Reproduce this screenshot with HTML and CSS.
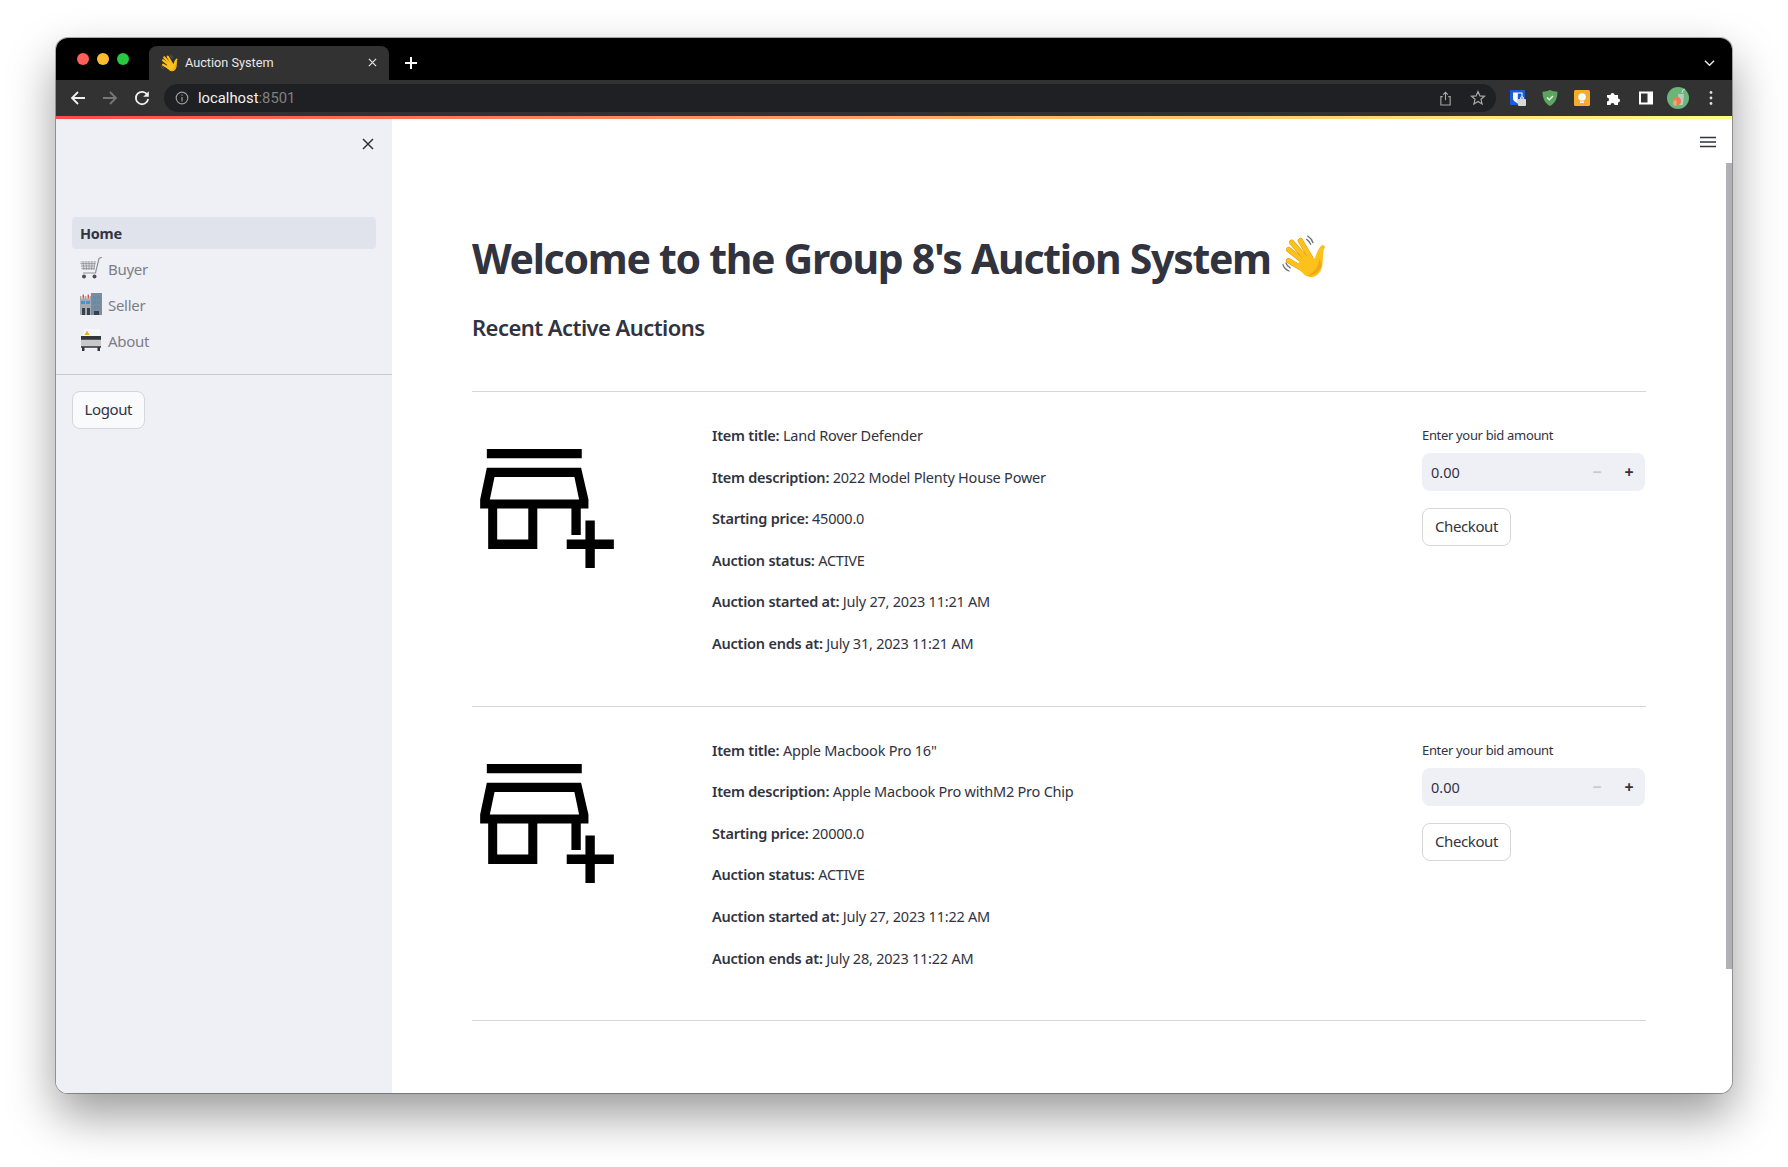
FILE: index.html
```html
<!DOCTYPE html>
<html lang="en">
<head>
    <meta charset="UTF-8">
    <meta name="viewport" content="width=device-width, initial-scale=1.0">
    <title>Auction System</title>
    <link rel="stylesheet" href="styles.css">
</head>
<body>
    <svg class="defs" width="0" height="0">
        <symbol id="wave" viewBox="30 25 135 135">
            <g fill="none" stroke="#6f7378" stroke-width="4" stroke-linecap="round">
                <path d="M110 31c8 5 13 11 16 20M107 41c6 4 9 8 12 15"/>
                <path d="M36 117c3 9 9 15 18 19M45 112c2 7 6 11 13 15"/>
            </g>
            <g fill="none" stroke="#e39a12" stroke-width="16" stroke-linecap="round">
                <path d="M62 50l44 50M88 45l30 50M53 72l48 38M53 105l42 25"/>
            </g>
            <g fill="none" stroke="#fcc21b" stroke-width="13" stroke-linecap="round">
                <path d="M62 50l44 50M88 45l30 50M53 72l48 38M53 105l42 25M155 65c-8 8-14 22-18 40"/>
            </g>
            <path d="M86 100l30-8 20 8 22-30-4 50c-4 24-22 36-38 34-14-2-24-14-36-30z" fill="#fcc21b"/>
            <path d="M146 98c-4 22-14 44-38 52 22 2 40-12 44-34z" fill="#f0a818"/>
        </symbol>
        <symbol id="store" viewBox="61 87 400 356">
            <path fill-rule="evenodd" d="M81 87h284v28H81zM81 143h282l22 95v27h-23v79h-28v-79H232v121H85V265H61v-27zM104 171l-14 67h267l-14-67zM112 265v93h93v-93z"/>
            <path d="M376 301h28v57h57v28h-57v57h-28v-57h-56v-28h56z"/>
        </symbol>
    </svg>

    <div class="window">
        <div class="tabstrip">
            <div class="lights">
                <span class="light red"></span>
                <span class="light yellow"></span>
                <span class="light green"></span>
            </div>
            <div class="tab">
                <svg class="tab-icon"><use href="#wave"/></svg>
                <span class="tab-title">Auction System</span>
                <svg class="tab-close" viewBox="0 0 10 10"><path d="M1 1l8 8M9 1l-8 8"/></svg>
            </div>
            <svg class="new-tab" viewBox="0 0 14 14"><path d="M7 1v12M1 7h12"/></svg>
            <svg class="tab-list" viewBox="0 0 12 8"><path d="M1 1.500l5 5 5-5"/></svg>
        </div>

        <div class="toolbar">
            <svg class="nav-btn" viewBox="0 0 16 16"><path d="M15 8H2M8 2L2 8l6 6"/></svg>
            <svg class="nav-btn dim" viewBox="0 0 16 16"><path d="M1 8h13M8 2l6 6-6 6"/></svg>
            <svg class="nav-btn" viewBox="0 0 16 16"><path d="M13.500 5A6.200 6.200 0 1 0 14.200 9"/><path class="solid" d="M14.800 1.200v5.600H9.200z"/></svg>
            <div class="omnibox">
                <svg class="info" viewBox="0 0 14 14"><circle cx="7" cy="7" r="5.800"/><path d="M7 6v4.400M7 3.400v1.400"/></svg>
                <span class="url">localhost<span class="url-port">:8501</span></span>
                <svg class="omni-icon share" viewBox="0 0 14 16"><path d="M4 6H2v9h10V6h-2M7 10V1.500M4.500 3.800L7 1.300l2.500 2.500"/></svg>
                <svg class="omni-icon star" viewBox="0 0 16 16"><path d="M8 1.600l1.900 4.300 4.600.4-3.500 3 1.100 4.600L8 11.500l-4.100 2.400L5 9.300l-3.500-3 4.600-.4z"/></svg>
            </div>
            <div class="extensions">
                <svg class="ext" viewBox="0 0 16 16">
                    <rect width="15" height="15" rx="1" fill="#175ddc"/>
                    <path d="M3 2.500h9.500v6c0 2-2 3.500-4.700 5C5 12 3 10.500 3 8.500z" fill="#fff"/>
                    <path d="M7.800 3.500h3.700v5c0 1.500-2 2.800-3.700 3.700z" fill="#175ddc"/>
                    <rect x="8" y="9" width="8" height="7" rx="1" fill="#d8d8d8"/>
                    <path d="M10.500 9.500V8a1.500 1.500 0 0 1 3 0v1.500" fill="none" stroke="#d8d8d8"/>
                </svg>
                <svg class="ext" viewBox="0 0 16 16">
                    <path d="M8 0c2.500 1.200 5 1.700 7.500 1.700 0 7-2.500 11.500-7.500 14.300C3 13.200.5 8.700.5 1.700 3 1.700 5.500 1.200 8 0z" fill="#5ba55f"/>
                    <path d="M5 7.500l2.300 2.300L11 6" fill="none" stroke="#e8f3e8" stroke-width="1.500"/>
                </svg>
                <svg class="ext" viewBox="0 0 16 16">
                    <rect width="16" height="16" rx="1.500" fill="#f9ab2d"/>
                    <circle cx="8" cy="7" r="3.800" fill="#fff"/>
                    <rect x="6" y="11.500" width="4" height="1.500" fill="#fff"/>
                </svg>
                <svg class="ext" viewBox="0 0 16 16">
                    <path fill="#fff" d="M1 5h3.500a2 2 0 1 1 4 0H12v3.500a2 2 0 1 1 0 4V15H8.500a2 2 0 1 0-4 0H1v-3.500a2 2 0 1 0 0-4z"/>
                </svg>
                <svg class="ext" viewBox="0 0 16 16">
                    <path fill="#fff" fill-rule="evenodd" d="M1 1.500h14v13H1zM3 3.500v9h6.500v-9z"/>
                </svg>
                <svg class="avatar" viewBox="0 0 22 22">
                    <circle cx="11" cy="11" r="11" fill="#6cb578"/>
                    <path d="M11 7h6l-1 11h-4z" fill="#b9c9c9"/>
                    <path d="M15 6l1-3 2-1" fill="none" stroke="#d5dede"/>
                    <circle cx="10" cy="14" r="4" fill="#ef7c45"/>
                    <ellipse cx="8" cy="16" rx="2" ry="3" fill="#f3a27a"/>
                </svg>
                <svg class="menu-dots" viewBox="0 0 4 16">
                    <circle cx="2" cy="2.500" r="1.400"/><circle cx="2" cy="8" r="1.400"/><circle cx="2" cy="13.500" r="1.400"/>
                </svg>
            </div>
        </div>
        <div class="stripe"></div>

        <div class="app">
            <aside class="sidebar">
                <div class="sidebar-top">
                    <svg class="close-btn" viewBox="0 0 12 12"><path d="M1 1l10 10M11 1L1 11"/></svg>
                </div>
                <nav class="pages">
                    <a class="page active">Home</a>
                    <a class="page">
                        <svg class="page-icon" viewBox="0 0 22 22">
                            <path d="M0 4h16l-1.500 9H2z" fill="#d6d8db"/>
                            <path d="M.5 6.500h15M1 9h14M1.500 11.500h13M3 4l1 9M6 4l.5 9M9 4v9M12 4l-.5 9M15 4l-1 9" stroke="#85898e" stroke-width=".6"/>
                            <path d="M22 0l-3 1.500L15.500 16H3" fill="none" stroke="#8f9297" stroke-width="1.200"/>
                            <circle cx="4" cy="19.500" r="2" fill="#4c4f53"/>
                            <circle cx="14.500" cy="19.500" r="2" fill="#4c4f53"/>
                        </svg>
                        Buyer
                    </a>
                    <a class="page">
                        <svg class="page-icon" viewBox="0 0 22 22">
                            <rect x="0" y="3" width="11" height="19" fill="#a3aab2"/>
                            <rect x="11" y="0" width="11" height="22" fill="#7f8b97"/>
                            <path d="M1.500 1.500h3v4h-3zM6.500 1.500h3v4h-3z" fill="#fff"/>
                            <path d="M2.500 1.500h1.500v4H2.500zM7.500 1.500H9v4H7.500z" fill="#e04f4f"/>
                            <path d="M1 8h4v3H1zM6 8h4v3H6zM13 3h3v3h-3zM17 3h3v3h-3zM13 8h3v3h-3zM17 8h3v3h-3zM13 13h3v3h-3zM17 13h3v3h-3z" fill="#4d93c9"/>
                            <path d="M2 15h3v7H2zM7 15h3v7H7zM14 18h5v4h-5z" fill="#39424c"/>
                        </svg>
                        Seller
                    </a>
                    <a class="page">
                        <svg class="page-icon" viewBox="0 0 22 22">
                            <rect x="4" y="0" width="16" height="8" fill="#f7f7f7"/>
                            <path d="M7 1.500l2.500 4.500h-5z" fill="#f5a623"/>
                            <rect x="1" y="7" width="20" height="3" fill="#33363a"/>
                            <rect x="1" y="10" width="20" height="8" fill="#c7c8ca"/>
                            <path d="M1 10h20M1 18h20" stroke="#33363a" stroke-width="1.400"/>
                            <path d="M2 18h2.500v4H2zM17.500 18H20v4h-2.500z" fill="#33363a"/>
                        </svg>
                        About
                    </a>
                </nav>
                <div class="sidebar-rule"></div>
                <button class="btn logout">Logout</button>
            </aside>

            <main class="content">
                <svg class="hamburger" viewBox="0 0 16 12"><path d="M0 1.500h16M0 6h16M0 10.500h16"/></svg>
                <div class="scroll-thumb"></div>

                <h1>Welcome to the Group 8's Auction System <svg class="h1-wave"><use href="#wave"/></svg></h1>
                <h3>Recent Active Auctions</h3>
                <hr>

                <section class="auction">
                    <svg class="item-img"><use href="#store"/></svg>
                    <div class="item-info">
                        <p><b>Item title:</b> Land Rover Defender</p>
                        <p><b>Item description:</b> 2022 Model Plenty House Power</p>
                        <p><b>Starting price:</b> 45000.0</p>
                        <p><b>Auction status:</b> ACTIVE</p>
                        <p><b>Auction started at:</b> July 27, 2023 11:21 AM</p>
                        <p><b>Auction ends at:</b> July 31, 2023 11:21 AM</p>
                    </div>
                    <div class="bid">
                        <label class="bid-label">Enter your bid amount</label>
                        <div class="number-input">
                            <span class="number-value">0.00</span>
                            <span class="step minus">−</span>
                            <span class="step plus">+</span>
                        </div>
                        <button class="btn">Checkout</button>
                    </div>
                </section>
                <hr>

                <section class="auction">
                    <svg class="item-img"><use href="#store"/></svg>
                    <div class="item-info">
                        <p><b>Item title:</b> Apple Macbook Pro 16"</p>
                        <p><b>Item description:</b> Apple Macbook Pro withM2 Pro Chip</p>
                        <p><b>Starting price:</b> 20000.0</p>
                        <p><b>Auction status:</b> ACTIVE</p>
                        <p><b>Auction started at:</b> July 27, 2023 11:22 AM</p>
                        <p><b>Auction ends at:</b> July 28, 2023 11:22 AM</p>
                    </div>
                    <div class="bid">
                        <label class="bid-label">Enter your bid amount</label>
                        <div class="number-input">
                            <span class="number-value">0.00</span>
                            <span class="step minus">−</span>
                            <span class="step plus">+</span>
                        </div>
                        <button class="btn">Checkout</button>
                    </div>
                </section>
                <hr>
            </main>
        </div>
    </div>
</body>
</html>
```

FILE: styles.css
```css
/* Basic reset */
* {
    box-sizing: border-box;
    margin: 0;
    padding: 0;
}

html, body {
    height: 1167px;
    overflow: hidden;
}

body {
    padding: 38px 56px 0;
    background-color: #fff;
    color: #31333f;
    font-family: "Noto Sans", Arial, sans-serif;
}

.defs {
    display: block;
    height: 0;
}

.window {
    display: flex;
    flex-direction: column;
    height: 1055px;
    border-radius: 12px;
    overflow: hidden;
    box-shadow: 0 0 0 1px rgba(0, 0, 0, 0.3), 0 22px 48px rgba(0, 0, 0, 0.4);
}

/* Browser chrome */
.tabstrip {
    display: flex;
    align-items: flex-end;
    height: 42px;
    padding-left: 21px;
    background-color: #000;
}

.lights {
    display: flex;
    gap: 8px;
    align-self: flex-start;
    margin-top: 15px;
    margin-right: 20px;
}

.light {
    width: 12px;
    height: 12px;
    border-radius: 50%;
}

.red { background-color: #ff5f57; }
.yellow { background-color: #febc2e; }
.green { background-color: #28c840; }

.tab {
    display: flex;
    align-items: center;
    width: 240px;
    height: 34px;
    padding: 0 12px 1px 11px;
    background-color: #323232;
    border-radius: 8px 8px 0 0;
}

.tab-icon {
    width: 18px;
    height: 18px;
    margin-right: 7px;
}

.tab-title {
    flex: 1;
    color: #e8e8e8;
    font-family: Roboto, Arial, sans-serif;
    font-size: 12.7px;
}

.tab-close {
    width: 9px;
    height: 9px;
    fill: none;
    stroke: #e0e0e0;
    stroke-width: 1.4;
}

.new-tab {
    align-self: center;
    width: 14px;
    height: 14px;
    margin: 8px 0 0 15px;
    fill: none;
    stroke: #fff;
    stroke-width: 2;
}

.tab-list {
    align-self: center;
    width: 11px;
    height: 8px;
    margin: 8px 17px 0 auto;
    fill: none;
    stroke: #e8e8e8;
    stroke-width: 1.5;
}

.toolbar {
    display: flex;
    align-items: center;
    height: 36px;
    padding-left: 14px;
    background-color: #323232;
}

.nav-btn {
    width: 16px;
    height: 16px;
    margin-right: 16px;
    fill: none;
    stroke: #f0f0f0;
    stroke-width: 1.8;
}

.nav-btn.dim {
    stroke: #777;
}

.nav-btn .solid {
    fill: #f0f0f0;
    stroke: none;
}

.omnibox {
    display: flex;
    align-items: center;
    width: 1332px;
    height: 28px;
    margin-left: -2px;
    padding: 0 10px 0 11px;
    background-color: #1f2023;
    border-radius: 14px;
}

.info {
    width: 14px;
    height: 14px;
    margin-right: 9px;
    fill: none;
    stroke: #9a9a9a;
    stroke-width: 1.2;
}

.url {
    flex: 1;
    color: #f2f2f2;
    font-family: Roboto, Arial, sans-serif;
    font-size: 14.8px;
}

.url-port {
    color: #808080;
}

.omni-icon {
    fill: none;
    stroke: #a8a8a8;
    stroke-width: 1.2;
}

.share {
    width: 13px;
    height: 15px;
    margin-right: 18px;
}

.star {
    width: 16px;
    height: 16px;
}

.extensions {
    display: flex;
    align-items: center;
    margin-left: 14px;
}

.ext {
    width: 16px;
    height: 16px;
    margin-right: 16px;
}

.avatar {
    width: 22px;
    height: 22px;
    margin-left: -3px;
    margin-right: 20px;
}

.menu-dots {
    width: 4px;
    height: 16px;
    fill: #e0e0e0;
}

.stripe {
    height: 3px;
    background: linear-gradient(90deg, #ff4b4b, #fffd80);
}

/* App layout */
.app {
    flex: 1;
    display: flex;
    min-height: 0;
    background-color: #fff;
}

.sidebar {
    width: 336px;
    padding: 0 16px;
    background-color: #eff0f5;
}

.sidebar-top {
    display: flex;
    justify-content: flex-end;
    height: 98px;
    padding: 19px 0 0;
}

.close-btn {
    width: 12px;
    height: 12px;
    margin-right: 2px;
    fill: none;
    stroke: #31333f;
    stroke-width: 1.5;
}

.pages {
    display: flex;
    flex-direction: column;
    gap: 4px;
}

.page {
    display: flex;
    align-items: center;
    height: 32px;
    padding: 0 8px;
    border-radius: 4px;
    color: #7c7e87;
    font-size: 15px;
    letter-spacing: -0.3px;
}

.page.active {
    background-color: #e0e3ec;
    color: #31333f;
    font-size: 14.5px;
    font-weight: 700;
}

.page-icon {
    width: 22px;
    height: 22px;
    margin-top: -2px;
    margin-right: 6px;
}

.sidebar-rule {
    height: 1px;
    margin: 17px -16px 16px;
    background-color: #c8c9cf;
}

.btn {
    display: block;
    height: 38px;
    padding: 0 12px 2px;
    background-color: #fff;
    border: 1px solid #d5d6da;
    border-radius: 8px;
    color: #31333f;
    font-family: "Noto Sans", Arial, sans-serif;
    font-size: 15px;
    letter-spacing: -0.4px;
}

.logout {
    padding: 0 11.5px 2px;
    background-color: #f9fafc;
}

/* Main content */
.content {
    position: relative;
    flex: 1;
    padding: 113px 86px 0 80px;
    overflow: hidden;
}

.hamburger {
    position: absolute;
    top: 17px;
    right: 16px;
    width: 16px;
    height: 12px;
    fill: none;
    stroke: #31333f;
    stroke-width: 1.6;
}

.scroll-thumb {
    position: absolute;
    top: 44px;
    right: 0;
    width: 6px;
    height: 806px;
    background-color: #b0b1b6;
}

h1 {
    display: flex;
    align-items: center;
    gap: 10px;
    height: 53px;
    margin-bottom: 28px;
    font-size: 41px;
    font-weight: 700;
    line-height: 53px;
    letter-spacing: -1.3px;
    white-space: nowrap;
}

.h1-wave {
    width: 45px;
    height: 45px;
    margin-top: -5px;
}

h3 {
    height: 29px;
    margin-bottom: 49px;
    font-size: 22px;
    font-weight: 600;
    line-height: 29px;
    letter-spacing: -0.55px;
}

hr {
    height: 1px;
    background-color: #d5d6da;
    border: none;
}

.auction {
    display: grid;
    grid-template-columns: 240px 710px 1fr;
    align-items: start;
    padding: 31px 0 33px;
}

.item-img {
    display: block;
    width: 134px;
    height: 119px;
    margin: 26px 0 0 8px;
}

.item-info p {
    margin-bottom: 16px;
    font-size: 14.5px;
    line-height: 25.6px;
    letter-spacing: -0.23px;
}

.item-info b {
    font-weight: 600;
}

.bid-label {
    display: block;
    height: 22px;
    margin: 1px 0 7px;
    color: #31333f;
    font-size: 13px;
    line-height: 22px;
    letter-spacing: -0.33px;
}

.number-input {
    display: flex;
    align-items: center;
    width: 223px;
    height: 38px;
    padding: 0 9px;
    background-color: #eff0f5;
    border-radius: 8px;
}

.number-value {
    flex: 1;
    font-size: 14.5px;
}

.step {
    width: 32px;
    font-size: 16px;
    font-weight: 700;
    text-align: center;
}

.minus {
    color: #c5cad5;
}

.plus {
    margin-right: -9px;
}

.number-input + .btn {
    margin-top: 17px;
}
```
